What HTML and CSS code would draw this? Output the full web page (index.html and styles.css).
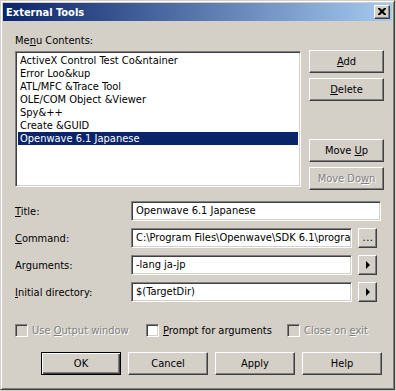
FILE: index.html
```html
<!DOCTYPE html>
<html>
<head>
<meta charset="utf-8">
<link rel="stylesheet" href="styles.css">
</head>
<body>
<div class="window">
  <div class="titlebar">
    <span class="title">External Tools</span>
    <div class="close">
      <svg width="8" height="7" viewBox="0 0 8 7"><path d="M0 0h2l2 2 2-2h2v1l-2.5 2.5L8 6v1H6L4 5 2 7H0V6l2.5-2.5L0 1z" fill="#000"/></svg>
    </div>
  </div>
  <div class="content">
    <div class="label menu-label">Me<u>n</u>u Contents:</div>
    <div class="menu-row">
      <div class="listbox sunken">
        <div class="item">ActiveX Control Test Co&amp;ntainer</div>
        <div class="item">Error Loo&amp;kup</div>
        <div class="item">ATL/MFC &amp;Trace Tool</div>
        <div class="item">OLE/COM Object &amp;Viewer</div>
        <div class="item">Spy&amp;++</div>
        <div class="item">Create &amp;GUID</div>
        <div class="item selected">Openwave 6.1 Japanese</div>
      </div>
      <div class="side">
        <div class="btn"><span><u>A</u>dd</span></div>
        <div class="btn"><span><u>D</u>elete</span></div>
        <div class="btn move-up"><span>Move <u>U</u>p</span></div>
        <div class="btn disabled"><span>Move Do<u>w</u>n</span></div>
      </div>
    </div>
    <div class="fields">
      <div class="field">
        <div class="flabel"><u>T</u>itle:</div>
        <div class="input sunken wide">Openwave 6.1 Japanese</div>
      </div>
      <div class="field">
        <div class="flabel"><u>C</u>ommand:</div>
        <div class="input sunken">C:\Program Files\Openwave\SDK 6.1\program\http\OSDK61J.exe</div>
        <div class="btn small"><span class="dots">...</span></div>
      </div>
      <div class="field">
        <div class="flabel">Ar<u>g</u>uments:</div>
        <div class="input sunken">-lang ja-jp</div>
        <div class="btn small"><span class="arrow"></span></div>
      </div>
      <div class="field">
        <div class="flabel"><u>I</u>nitial directory:</div>
        <div class="input sunken">$(TargetDir)</div>
        <div class="btn small"><span class="arrow"></span></div>
      </div>
    </div>
    <div class="checks">
      <div class="check disabled"><span class="box sunken"></span><span class="ctext">Use <u>O</u>utput window</span></div>
      <div class="check"><span class="box sunken white"></span><span class="ctext"><u>P</u>rompt for arguments</span></div>
      <div class="check disabled"><span class="box sunken"></span><span class="ctext">Close on <u>e</u>xit</span></div>
    </div>
    <div class="buttons">
      <div class="btn big default"><span>OK</span></div>
      <div class="btn big"><span>Cancel</span></div>
      <div class="btn big"><span>Apply</span></div>
      <div class="btn big"><span>Help</span></div>
    </div>
  </div>
</div>
</body>
</html>
```

FILE: styles.css
```css
* { box-sizing: border-box; }
html, body { margin: 0; padding: 0; background: #D4D0C8; }
body {
  font-family: "DejaVu Sans Condensed", "DejaVu Sans", sans-serif;
  font-size: 11px;
  line-height: 13px;
  color: #000;
}
u { text-decoration: underline; text-underline-offset: 1px; }

.window {
  width: 395px;
  height: 390px;
  background: #D4D0C8;
  border: 1px solid;
  border-color: #D4D0C8 #404040 #404040 #D4D0C8;
  box-shadow: inset 1px 1px #fff, inset -1px -1px #808080;
  padding: 2px;
}

.titlebar {
  height: 18px;
  background: linear-gradient(to right, #0A246A, #A6CAF0);
  display: flex;
  align-items: center;
  justify-content: space-between;
  padding: 0 2px 0 3px;
}
.title {
  color: #fff;
  font-weight: bold;
  font-size: 11px;
}
.close {
  width: 16px;
  height: 14px;
  background: #D4D0C8;
  border: 1px solid;
  border-color: #fff #404040 #404040 #fff;
  box-shadow: inset -1px -1px #808080;
  display: flex;
  align-items: center;
  justify-content: center;
  padding-bottom: 1px;
}
.close svg { display: block; }

.content {
  padding: 0 0 0 12px;
}
.menu-label {
  margin-top: 13px;
  height: 13px;
}

.sunken {
  border: 1px solid;
  border-color: #808080 #fff #fff #808080;
  box-shadow: inset 1px 1px #404040, inset -1px -1px #D4D0C8;
}

.menu-row {
  margin-top: 4px;
  height: 136px;
  display: flex;
  align-items: flex-start;
}
.listbox {
  width: 286px;
  height: 136px;
  background: #fff;
  padding: 2px 2px;
}
.item {
  height: 13px;
  padding-left: 2px;
  white-space: nowrap;
}
.item.selected {
  background: #0A246A;
  color: #fff;
}

.side {
  margin-left: 8px;
  margin-top: -1px;
  display: flex;
  flex-direction: column;
}
.btn {
  background: #D4D0C8;
  border: 1px solid;
  border-color: #fff #404040 #404040 #fff;
  box-shadow: inset -1px -1px #808080, inset 1px 1px #D4D0C8;
  display: flex;
  align-items: center;
  justify-content: center;
  white-space: nowrap;
}
.side .btn {
  width: 75px;
  height: 23px;
  margin-bottom: 5px;
}
.side .btn.move-up { margin-top: 33px; }
.btn.disabled {
  color: #808080;
  text-shadow: 1px 1px #fff;
}

.fields {
  margin-top: 14px;
  display: flex;
  flex-direction: column;
  gap: 7px;
}
.field {
  display: flex;
  align-items: center;
  height: 20px;
}
.flabel {
  width: 116px;
  flex: none;
}
.input {
  width: 221px;
  height: 20px;
  flex: none;
  background: #fff;
  padding: 2px 4px 0 4px;
  overflow: hidden;
  white-space: nowrap;
}
.input.wide { width: 250px; }
.btn.small {
  width: 19px;
  height: 20px;
  flex: none;
  margin-left: 6px;
}
.dots {
  font-size: 11px;
  line-height: 11px;
  letter-spacing: 0.5px;
  padding-left: 1px;
  padding-bottom: 2px;
}
.arrow {
  width: 0;
  height: 0;
  border-top: 4px solid transparent;
  border-bottom: 4px solid transparent;
  border-left: 4px solid #000;
}

.checks {
  margin-top: 22px;
  display: grid;
  grid-template-columns: 131px 141px auto;
  height: 13px;
}
.check {
  display: flex;
  align-items: center;
  gap: 4px;
}
.box {
  width: 13px;
  height: 13px;
  background: #D4D0C8;
  flex: none;
}
.box.white { background: #fff; }
.check.disabled .ctext {
  color: #808080;
  text-shadow: 1px 1px #fff;
}

.buttons {
  margin-top: 15px;
  padding-left: 26px;
  display: flex;
  gap: 7px;
}
.btn.big {
  width: 80px;
  height: 23px;
}
.btn.default {
  border-color: #000;
  box-shadow: inset 1px 1px #fff, inset -1px -1px #404040, inset -2px -2px #808080;
}
```
